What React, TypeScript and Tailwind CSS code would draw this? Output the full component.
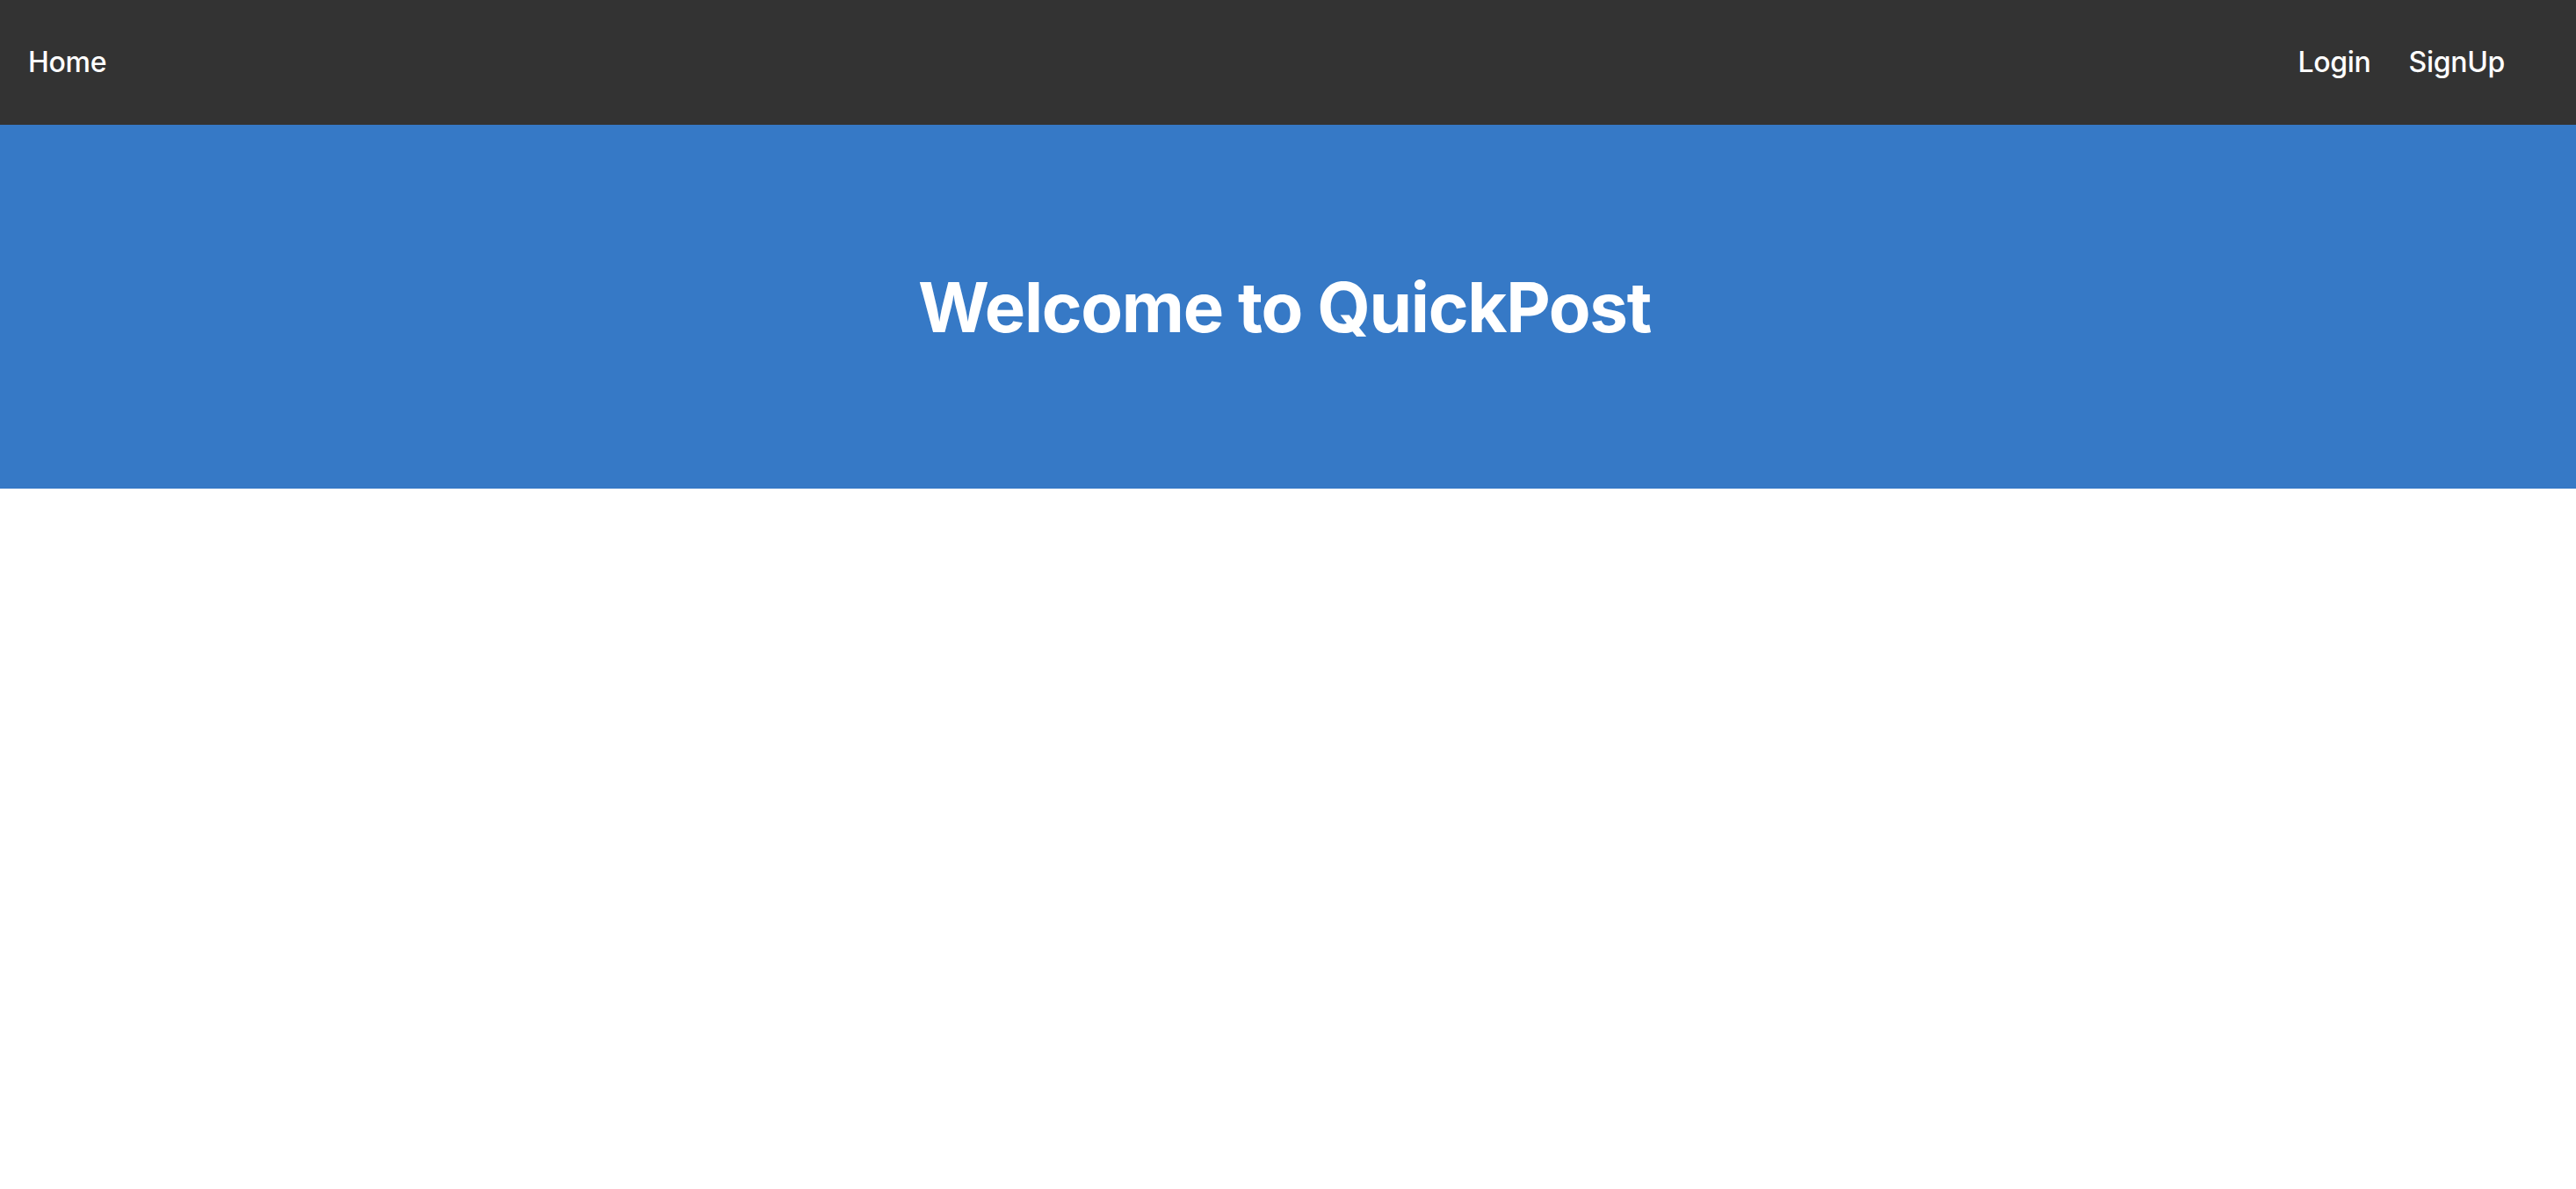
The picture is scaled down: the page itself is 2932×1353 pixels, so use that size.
export default function App() {
  return (
    <div className="min-h-screen bg-white font-['Inter','Liberation_Sans',sans-serif]">
      <nav className="flex h-[142px] items-center justify-between bg-[#333333] pl-[32px] pr-[81px] text-white">
        <a href="#" className="text-[32px] font-medium tracking-[-0.3px]">Home</a>
        <div className="flex items-center gap-[43px]">
          <a href="#" className="text-[32px] font-medium tracking-[-0.3px]">Login</a>
          <a href="#" className="text-[32px] font-medium tracking-[-0.3px]">SignUp</a>
        </div>
      </nav>
      <header className="flex h-[414px] items-center justify-center bg-[#3679c6] pr-[8px]">
        <h1 className="text-[78px] font-bold tracking-[-1.3px] text-white">Welcome to QuickPost</h1>
      </header>
    </div>
  )
}
